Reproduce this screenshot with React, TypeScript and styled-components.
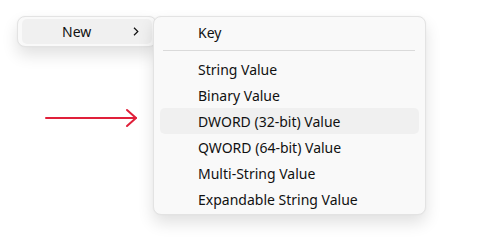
import React from 'react';
import styled, { createGlobalStyle } from 'styled-components';

const GlobalStyle = createGlobalStyle`
  html, body {
    margin: 0;
    padding: 0;
    background: #ffffff;
  }
  body {
    font-family: "Noto Sans", "Open Sans", "Liberation Sans", sans-serif;
    color: #111111;
  }
`;

const Stage = styled.div`
  position: relative;
  width: 484px;
  height: 250px;
  display: flex;
  align-items: flex-start;
  padding: 16px 0 0 17px;
  box-sizing: border-box;
`;

const MenuPanel = styled.div`
  background: #f9f9f9;
  border: 1px solid #e3e3e3;
  border-radius: 8px;
  box-shadow: 0 8px 16px rgba(0, 0, 0, 0.12), 0 0 2px rgba(0, 0, 0, 0.04);
  box-sizing: border-box;
`;

const ParentMenu = styled(MenuPanel)`
  width: 140px;
  height: 31px;
  padding: 2px 4px;
`;

const SubMenu = styled(MenuPanel)`
  position: relative;
  z-index: 1;
  width: 273px;
  margin-left: -4px;
  padding: 2px 6px 2px 6px;
`;

const Item = styled.div<{ $active?: boolean }>`
  display: flex;
  align-items: center;
  height: 26px;
  padding-left: 38px;
  border-radius: 5px;
  font-size: 14px;
  background: ${(p) => (p.$active ? '#f0f0f0' : 'transparent')};
  white-space: nowrap;
`;

const ParentItem = styled.div`
  display: flex;
  align-items: center;
  height: 25px;
  padding-left: 40px;
  padding-right: 13px;
  border-radius: 5px;
  background: #f0f0f0;
  font-size: 14px;
`;

const Label = styled.span`
  flex: 1;
`;

const Separator = styled.div`
  height: 1px;
  background: #dadada;
  margin: 5px 4px 5px 3px;
`;

const Pointer = styled.svg`
  position: absolute;
  left: 44px;
  top: 108px;
`;

const Chevron = () => (
  <svg width="6" height="9" viewBox="0 0 6 9">
    <path d="M1 0.8 L4.8 4.5 L1 8.2" fill="none" stroke="#111111" strokeWidth="1.2" />
  </svg>
);

const entries = [
  'String Value',
  'Binary Value',
  'DWORD (32-bit) Value',
  'QWORD (64-bit) Value',
  'Multi-String Value',
  'Expandable String Value',
];

const App: React.FC = () => {
  return (
    <>
      <GlobalStyle />
      <Stage>
        <ParentMenu>
          <ParentItem>
            <Label>New</Label>
            <Chevron />
          </ParentItem>
        </ParentMenu>
        <SubMenu>
          <Item>Key</Item>
          <Separator />
          {entries.map((e) => (
            <Item key={e} $active={e.startsWith('DWORD')}>
              {e}
            </Item>
          ))}
        </SubMenu>
        <Pointer width="96" height="20" viewBox="0 0 96 20">
          <path d="M2 10 L92 10" stroke="#e0203a" strokeWidth="2" strokeLinecap="round" />
          <path d="M83 2 L92 10 L83 18" fill="none" stroke="#e0203a" strokeWidth="2" strokeLinecap="round" strokeLinejoin="round" />
        </Pointer>
      </Stage>
    </>
  );
};

export default App;
